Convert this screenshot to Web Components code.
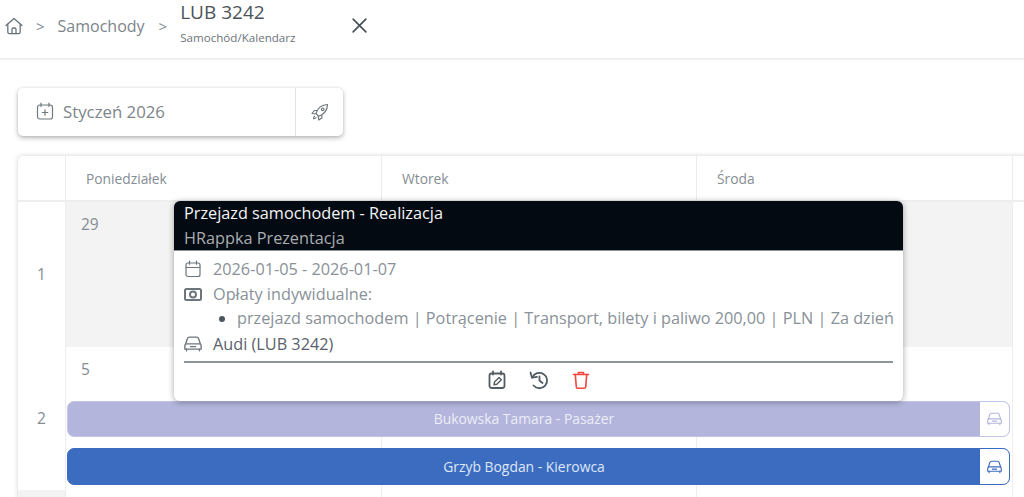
<!DOCTYPE html>
<html lang="pl">
<head>
<meta charset="utf-8">
<title>Samochód/Kalendarz</title>
<style>
    html, body { margin: 0; height: 100%; overflow: hidden; background: #fff; }
    body { font-family: "Open Sans", "Liberation Sans", sans-serif; color: #8a9299; }
</style>
</head>
<body>
<app-page>
    <app-header slot="header" title="LUB 3242" sub="Samochód/Kalendarz" crumb="Samochody"></app-header>
    <month-toolbar slot="toolbar" label="Styczeń 2026"></month-toolbar>
    <calendar-grid slot="calendar">
        <week-row number="1" kind="past" days="29"></week-row>
        <week-row number="2" days="5">
            <car-bar label="Bukowska Tamara - Pasażer" faded></car-bar>
            <car-bar label="Grzyb Bogdan - Kierowca"></car-bar>
        </week-row>
        <week-row number="" kind="stub"></week-row>
    </calendar-grid>
    <event-popup slot="popup"></event-popup>
</app-page>
<script>
'use strict';
const carIcon = `<svg viewBox="1.500 3 21 19" fill="none" stroke="currentColor" stroke-width="1.600" stroke-linejoin="round" stroke-linecap="round"><path d="M3.500 12.300 5.300 6.600C5.700 5.500 6.500 4.500 7.800 4.500h8.400c1.300 0 2.100 1 2.500 2.100l1.800 5.700"/><path d="M2.500 14.500c0-1.300.9-2.200 2.200-2.200h14.600c1.300 0 2.200.9 2.200 2.200V18.500H2.500z"/><path d="M4.500 18.500v2M19.500 18.500v2M9 15.500h6"/></svg>`;

class AppPage extends HTMLElement {
    constructor() {
        super();
        this.attachShadow({ mode: 'open' }).innerHTML = `
            <style>
                :host { display: block; position: relative; width: 1024px; height: 497px; overflow: hidden; }
                main { display: flex; flex-direction: column; gap: 20px; padding: 28px 0 0 18px; }
                /* the popup floats over the calendar */
                .popup { position: absolute; left: 174px; top: 201px; }
            </style>
            <slot name="header"></slot>
            <main>
                <slot name="toolbar"></slot>
                <slot name="calendar"></slot>
            </main>
            <div class="popup"><slot name="popup"></slot></div>
        `;
    }
}
customElements.define('app-page', AppPage);

class AppHeader extends HTMLElement {
    connectedCallback() {
        this.attachShadow({ mode: 'open' }).innerHTML = `
            <style>
                :host { display: flex; align-items: center; height: 60px; box-sizing: border-box; border-bottom: 2px solid #f0f0f0; padding: 0 0 7px 5px; color: #7d858b; font-size: 16px; }
                .home { width: 18px; height: 18px; color: #68727a; }
                .sep { font-size: 15px; margin: 0 13px; color: #868e94; }
                .crumb { margin-right: 1px; }
                .titles { display: flex; flex-direction: column; margin-top: -6px; }
                .title { font-size: 19px; color: #4b5359; line-height: 24px; }
                .sub { font-size: 11.600px; color: #6c747a; line-height: 14px; margin-top: 7px; }
                .close { width: 17px; height: 17px; margin-left: 56px; color: #454e54; }
            </style>
            <svg class="home" viewBox="0 0 18 18" fill="none" stroke="currentColor" stroke-width="1.300" stroke-linejoin="round" stroke-linecap="round"><path d="M1 8.500 9 1.500l8 7"/><path d="M2.800 7.500V15c0 1 .6 1.600 1.600 1.600h9.200c1 0 1.600-.6 1.600-1.600V7.500"/><path d="M7 16.500v-4.200c0-.8.600-1.300 1.300-1.300h1.400c.7 0 1.300.5 1.300 1.300v4.200"/></svg>
            <span class="sep">&gt;</span>
            <span class="crumb">${this.getAttribute('crumb')}</span>
            <span class="sep">&gt;</span>
            <div class="titles">
                <span class="title">${this.getAttribute('title')}</span>
                <span class="sub">${this.getAttribute('sub')}</span>
            </div>
            <svg class="close" viewBox="0 0 16 16" fill="none" stroke="currentColor" stroke-width="1.500" stroke-linecap="round"><path d="M2 2l12 12M14 2 2 14"/></svg>
        `;
    }
}
customElements.define('app-header', AppHeader);

class MonthToolbar extends HTMLElement {
    connectedCallback() {
        this.attachShadow({ mode: 'open' }).innerHTML = `
            <style>
                :host { display: flex; width: 325px; height: 48px; background: #fff; border-radius: 5px; box-shadow: 0 2px 5px rgba(0,0,0,.28), 0 0 3px rgba(0,0,0,.08); color: #7d858b; font-size: 16.800px; }
                .month { flex: 1; display: flex; align-items: center; gap: 9px; padding: 0 0 2px 18px; border-right: 1px solid #e4e4e4; }
                .rocket { width: 47px; display: flex; align-items: center; justify-content: center; }
                svg { width: 18px; height: 18px; color: #6f787e; }
            </style>
            <div class="month">
                <svg viewBox="0 0 18 18" fill="none" stroke="currentColor" stroke-width="1.200" stroke-linecap="round"><rect x="1.500" y="3" width="15" height="14" rx="2.200"/><path d="M5 1v3.500M13 1v3.500M9 7.800v5.400M6.300 10.500h5.400"/></svg>
                <span>${this.getAttribute('label')}</span>
            </div>
            <div class="rocket">
                <svg viewBox="0 0 18 18" fill="none" stroke="currentColor" stroke-width="1.200" stroke-linejoin="round"><path d="M6.500 12.200 5 10.500C6.500 5.500 10.500 1.800 16.500 1.500 16.400 7.500 12.500 11.500 7.800 13.300z"/><path d="M6 7.500H3.300L1 10.500l3.800.5M10.800 12.200V15L7.800 17l-.6-3.800"/><circle cx="11.700" cy="6.300" r="1.300"/><path d="M4 13c-1 .5-1.500 1.500-1.500 2.700 1.200 0 2.200-.5 2.800-1.500"/></svg>
            </div>
        `;
    }
}
customElements.define('month-toolbar', MonthToolbar);

class CalendarGrid extends HTMLElement {
    constructor() {
        super();
        this.attachShadow({ mode: 'open' }).innerHTML = `
            <style>
                :host { display: block; width: 1010px; background: #fff; border-radius: 5px 0 0 0; box-shadow: 0 0 5px rgba(0,0,0,.18); --cols: 47px 316px 315px 316px 16px; }
                .head { display: grid; grid-template-columns: var(--cols); height: 46px; box-sizing: border-box; border-bottom: 2px solid #eeeeee; color: #858d94; font-size: 13.800px; }
                .head div { display: flex; align-items: center; padding-left: 20px; border-left: 1px solid #ececec; }
                .head div:first-child, .head div:last-child { padding: 0; }
                .head div:first-child { border: 0; }
            </style>
            <div class="head"><div></div><div>Poniedziałek</div><div>Wtorek</div><div>Środa</div><div></div></div>
            <slot></slot>
        `;
    }
}
customElements.define('calendar-grid', CalendarGrid);

class WeekRow extends HTMLElement {
    connectedCallback() {
        const kind = this.getAttribute('kind') || '';
        const day = this.getAttribute('days') || '';
        const heights = { past: 145, stub: 12 };
        const h = heights[kind] || 143;
        const bg = kind === 'past' ? '#f3f3f3' : '#fff';
        this.attachShadow({ mode: 'open' }).innerHTML = `
            <style>
                :host { display: grid; grid-template-columns: var(--cols); height: ${h}px; box-sizing: border-box; color: #858d94; font-size: 14px; ${kind === 'stub' ? 'background:#f3f3f3;' : ''} }
                .num { grid-area: 1 / 1; display: flex; align-items: center; justify-content: center; font-size: 15.500px; padding-bottom: 1px; }
                .cell { grid-row: 1; background: ${bg}; border-left: 1px solid #eeeeee; padding: 11px 0 0 15px; font-size: 15.500px; line-height: 22px; }
                :host([kind="past"]) .cell.last { background: #fff; }
                .bars { grid-area: 1 / 2 / 1 / 5; display: flex; flex-direction: column; gap: 11px; padding: 54px 2px 0 2px; }
            </style>
            <div class="num">${this.getAttribute('number') || ''}</div>
            <div class="cell" style="grid-column:2">${day}</div>
            <div class="cell" style="grid-column:3"></div>
            <div class="cell" style="grid-column:4"></div>
            <div class="cell last" style="grid-column:5"></div>
            <div class="bars"><slot></slot></div>
        `;
    }
}
customElements.define('week-row', WeekRow);

class CarBar extends HTMLElement {
    connectedCallback() {
        this.attachShadow({ mode: 'open' }).innerHTML = `
            <style>
                :host { display: flex; height: 37px; box-sizing: border-box; border-radius: 7px; overflow: hidden; border: 1px solid #3c6cc0; background: #3c6cc0; color: #dfe7f6; font-size: 13.900px; }
                :host([faded]) { background: #b3b5dc; border-color: #c3c5e6; color: #ecedf7; height: 36px; }
                .label { flex: 1; display: flex; align-items: center; justify-content: center; padding-bottom: 1px; }
                .icon { width: 29px; background: #fff; display: flex; align-items: center; justify-content: center; color: #3c6cc0; }
                :host([faded]) .icon { color: #b3b5dc; }
                svg { width: 15px; height: 14px; }
            </style>
            <div class="label">${this.getAttribute('label')}</div>
            <div class="icon">${carIcon}</div>
        `;
    }
}
customElements.define('car-bar', CarBar);

class EventPopup extends HTMLElement {
    connectedCallback() {
        this.attachShadow({ mode: 'open' }).innerHTML = `
            <style>
                :host { display: block; width: 729px; height: 200px; background: #fff; border-radius: 6px; overflow: hidden; box-shadow: 0 1px 6px rgba(0,0,0,.35); font-size: 16.250px; color: #899198; }
                header { background: #030a12; padding: 0 10px; box-sizing: border-box; border-bottom: 1px solid #8d9296; height: 50px; line-height: 24px; }
                .t1 { color: #f4f5f6; }
                .t2 { color: #a9adb1; margin-top: 1px; }
                .body { padding: 5px 10px 0; }
                .row { display: flex; align-items: center; gap: 11px; height: 25px; }
                .row svg { width: 18px; height: 18px; color: #6d767c; flex: none; }
                ul { margin: 0; padding: 0 0 0 53px; line-height: 25px; height: 25px; white-space: nowrap; }
                li::marker { color: #4d565c; }
                .car { color: #59626a; }
                hr { border: 0; border-top: 2px solid #8e9599; margin: 5px 0 0; }
                .actions { display: flex; justify-content: center; gap: 22px; padding-top: 7px; }
                .actions svg { width: 20px; height: 20px; color: #515c63; }
                .actions .del { color: #f4443c; }
            </style>
            <header>
                <div class="t1">Przejazd samochodem - Realizacja</div>
                <div class="t2">HRappka Prezentacja</div>
            </header>
            <div class="body">
                <div class="row">
                    <svg viewBox="0 0 18 18" fill="none" stroke="currentColor" stroke-width="1.200" stroke-linecap="round"><rect x="2" y="3" width="14" height="13.500" rx="2"/><path d="M2 7.500h14M5.500 1.200v3M12.500 1.200v3"/></svg>
                    <span>2026-01-05 - 2026-01-07</span>
                </div>
                <div class="row">
                    <svg viewBox="0 0 18 18" fill="none" stroke="currentColor" stroke-width="2"><rect x="1" y="4" width="16" height="11" rx="1.500"/><circle cx="9" cy="9.500" r="3"/></svg>
                    <span>Opłaty indywidualne:</span>
                </div>
                <ul><li>przejazd samochodem | Potrącenie | Transport, bilety i paliwo 200,00 | PLN | Za dzień</li></ul>
                <div class="row car">${carIcon}<span>Audi (LUB 3242)</span></div>
                <hr>
                <div class="actions">
                    <svg viewBox="0 0 20 20" fill="none" stroke="currentColor" stroke-width="1.800" stroke-linecap="round" stroke-linejoin="round"><rect x="2.500" y="3.500" width="15" height="14.500" rx="2.200"/><path d="M6 1.500v3M14 1.500v3"/><path d="M7 14.800l.5-2.800 4.500-4.500 2.300 2.300-4.500 4.500z" stroke-width="1.400"/></svg>
                    <svg viewBox="0 0 20 20" fill="none" stroke="currentColor" stroke-width="1.800" stroke-linecap="round" stroke-linejoin="round"><path d="M3.300 7.500A7.700 7.700 0 1 1 4.500 15.500"/><path d="M1.500 2.500 3 7.700l5-.9"/><path d="M10.500 6.500v4l3 2.500"/></svg>
                    <svg class="del" viewBox="0 0 20 20" fill="none" stroke="currentColor" stroke-width="1.600" stroke-linecap="round" stroke-linejoin="round"><path d="M2.500 4.500h15M7.500 4.500V2.500h5v2"/><path d="M4.300 4.500 5.300 17c.1.800.6 1.300 1.400 1.300h6.600c.8 0 1.300-.5 1.400-1.300l1-12.500"/></svg>
                </div>
            </div>
        `;
    }
}
customElements.define('event-popup', EventPopup);
</script>
</body>
</html>
